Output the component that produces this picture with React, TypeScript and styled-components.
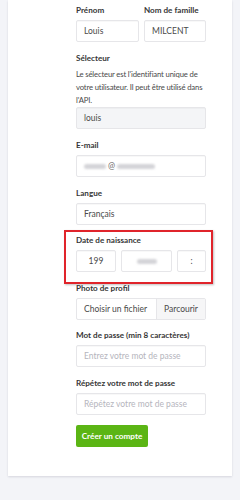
import React from "react";
import styled, { createGlobalStyle } from "styled-components";

const Global = createGlobalStyle`
  html, body { margin: 0; padding: 0; background: #f3f4f8; }
  body { font-family: Lato, "Open Sans", sans-serif; color: #363636; }
  * { box-sizing: border-box; }
`;

const Page = styled.div`
  width: 240px;
  height: 500px;
  background: #f3f4f8;
  overflow: hidden;
  display: flex;
  flex-direction: column;
  align-items: flex-start;
`;

const Card = styled.div`
  margin-left: 8px;
  width: 224px;
  background: #ffffff;
  box-shadow: 0 1px 2px rgba(10, 10, 40, 0.12);
  padding: 5px 26px 29px 68px;
`;

const Form = styled.div`
  width: 130px;
  display: flex;
  flex-direction: column;
`;

const Field = styled.div<{ $mt?: number; $highlight?: boolean }>`
  position: relative;
  margin-top: ${(p) => p.$mt ?? 10.5}px;
  display: flex;
  flex-direction: column;
  ${(p) =>
    p.$highlight &&
    `
    &::after {
      content: "";
      position: absolute;
      left: -12px;
      right: -7px;
      top: -5px;
      bottom: -12px;
      border: 2px solid #e0242b;
      box-shadow: 1px 1px 2px rgba(0,0,0,0.25);
      pointer-events: none;
    }
  `}
`;

const Row = styled.div`
  display: flex;
  gap: 5px;
`;

const Col = styled.div<{ $w?: number }>`
  display: flex;
  flex-direction: column;
  width: ${(p) => (p.$w ? `${p.$w}px` : "auto")};
  flex: ${(p) => (p.$w ? "none" : "1")};
`;

const Label = styled.div`
  font-size: 8.1px;
  font-weight: 700;
  line-height: 11px;
  height: 11px;
  margin-bottom: 4px;
  color: #363636;
  white-space: nowrap;
`;

const Help = styled.div`
  font-size: 7.7px;
  letter-spacing: -0.15px;
  line-height: 13px;
  color: #4a4a4a;
`;

const Input = styled.div<{ $w?: number; $disabled?: boolean; $placeholder?: boolean; $center?: boolean }>`
  height: 22px;
  flex: none;
  width: ${(p) => (p.$w ? `${p.$w}px` : "100%")};
  border: 1px solid #e6e6e9;
  border-radius: 2px;
  background: ${(p) => (p.$disabled ? "#f4f5f7" : "#ffffff")};
  box-shadow: inset 0 1px 1px rgba(10, 10, 10, 0.03);
  display: flex;
  align-items: center;
  justify-content: ${(p) => (p.$center ? "center" : "flex-start")};
  padding: 0 7px;
  font-size: 8.5px;
  color: ${(p) => (p.$placeholder ? "#b5b5bd" : "#4a4a4a")};
  white-space: nowrap;
  overflow: hidden;
`;

const Blur = styled.span<{ $w: number }>`
  display: inline-block;
  width: ${(p) => p.$w}px;
  height: 5px;
  border-radius: 3px;
  background: #d4d4d8;
  filter: blur(1.2px);
`;

const At = styled.span`
  margin: 0 2px;
  color: #6a6a6a;
`;

const FileInput = styled.div`
  height: 22px;
  display: flex;
  border: 1px solid #e6e6e9;
  border-radius: 2px;
  font-size: 8.5px;
  color: #4a4a4a;
  overflow: hidden;
`;

const FileName = styled.div`
  flex: 1;
  display: flex;
  align-items: center;
  padding-left: 7px;
  white-space: nowrap;
`;

const Browse = styled.div`
  width: 49px;
  display: flex;
  align-items: center;
  justify-content: center;
  background: #f6f6f7;
  border-left: 1px solid #e6e6e9;
  white-space: nowrap;
`;

const Button = styled.button`
  margin-top: 10.5px;
  align-self: flex-start;
  height: 22px;
  width: 72px;
  border: none;
  border-radius: 2px;
  background: #5bb514;
  color: #ffffff;
  font-family: Lato, "Open Sans", sans-serif;
  font-size: 8.2px;
  font-weight: 700;
  padding: 0;
`;

export default function App() {
  return (
    <Page>
      <Global />
      <Card>
        <Form>
          <Field $mt={0}>
            <Row>
              <Col $w={63}>
                <Label>Prénom</Label>
                <Input>Louis</Input>
              </Col>
              <Col>
                <Label>Nom de famille</Label>
                <Input>MILCENT</Input>
              </Col>
            </Row>
          </Field>
          <Field $mt={11}>
            <Label>Sélecteur</Label>
            <Help>
              Le sélecteur est l'identifiant unique de votre utilisateur. Il peut être utilisé dans l'API.
            </Help>
            <Input $disabled>louis</Input>
          </Field>
          <Field $mt={11}>
            <Label>E-mail</Label>
            <Input>
              <Blur $w={22} />
              <At>@</At>
              <Blur $w={38} />
            </Input>
          </Field>
          <Field>
            <Label>Langue</Label>
            <Input>Français</Input>
          </Field>
          <Field $highlight>
            <Label>Date de naissance</Label>
            <Row>
              <Input $w={40} $center>199</Input>
              <Input $w={51} $center>
                <Blur $w={20} />
              </Input>
              <Input $w={29} $center>:</Input>
            </Row>
          </Field>
          <Field>
            <Label>Photo de profil</Label>
            <FileInput>
              <FileName>Choisir un fichier</FileName>
              <Browse>Parcourir</Browse>
            </FileInput>
          </Field>
          <Field>
            <Label>Mot de passe (min 8 caractères)</Label>
            <Input $placeholder>Entrez votre mot de passe</Input>
          </Field>
          <Field>
            <Label>Répétez votre mot de passe</Label>
            <Input $placeholder>Répétez votre mot de passe</Input>
          </Field>
          <Button>Créer un compte</Button>
        </Form>
      </Card>
    </Page>
  );
}
